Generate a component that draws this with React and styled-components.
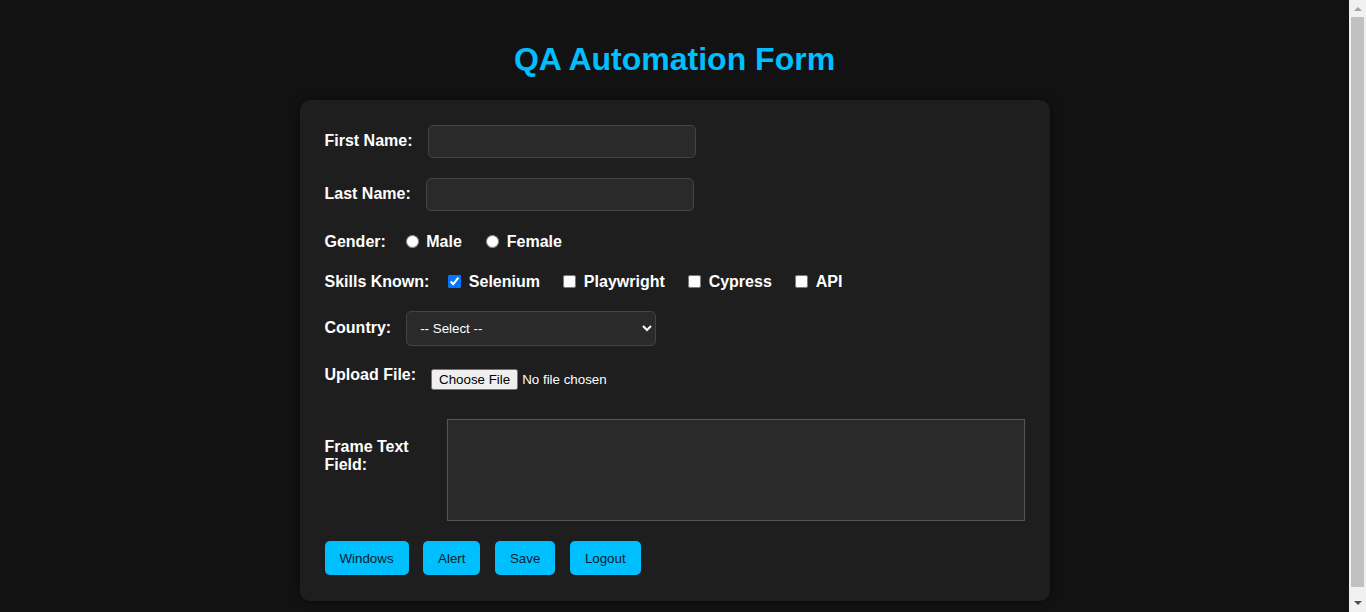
import React from "react";
import styled, { createGlobalStyle } from "styled-components";

const GlobalStyle = createGlobalStyle`
  html, body {
    margin: 0;
    background-color: #121212;
  }

  body {
    padding: 20px 37px 20px 20px;
    font-family: "Liberation Sans", Arial, sans-serif;
    color: #ffffff;
  }
`;

// browser scrollbar as seen in the screenshot (page is a little taller than the window)
const Scrollbar = styled.div`
  position: fixed;
  top: 0;
  right: 0;
  bottom: 0;
  width: 17px;
  display: flex;
  flex-direction: column;
  background-color: #f1f1f1;
`;

const ScrollArrow = styled.div`
  height: 17px;
  display: flex;
  align-items: center;
  justify-content: center;
  flex-shrink: 0;
`;

const ScrollThumb = styled.div`
  height: 570px;
  margin: 0 2px;
  background-color: #c1c1c1;
`;

const Title = styled.h1`
  text-align: center;
  color: #00bfff;
  font-size: 32px;
  margin: 21.44px 0;
  line-height: normal;
`;

const FormCard = styled.div`
  width: 750px;
  box-sizing: border-box;
  margin: 0 auto;
  padding: 25px 25px 26px;
  background-color: #1e1e1e;
  border-radius: 10px;
  box-shadow: 0 0 10px rgba(0, 0, 0, 0.5);
`;

const Row = styled.div`
  display: flex;
  align-items: ${(p) => p.$align || "center"};
  box-sizing: border-box;
  height: ${(p) => p.$height}px;
  padding-top: ${(p) => p.$pad || 0}px;
  margin-bottom: 20px;
`;

const Label = styled.label`
  font-size: 16px;
  font-weight: bold;
  line-height: 18px;
  margin-right: 15px;
  margin-top: ${(p) => p.$top || 0}px;
  width: ${(p) => (p.$width ? `${p.$width}px` : "auto")};
  flex-shrink: 0;
`;

const TextInput = styled.input`
  width: 250px;
  height: 15px;
  padding: 8px;
  background-color: #2a2a2a;
  border: 1px solid #444;
  border-radius: 5px;
  color: #fff;
  font-family: "Liberation Sans", Arial, sans-serif;
  font-size: 13.33px;
  outline: none;
`;

const Option = styled.label`
  display: flex;
  align-items: center;
  font-size: 16px;
  font-weight: bold;
  margin-right: 19.45px;

  input {
    margin: ${(p) => (p.$radio ? "0 7.45px 0 5px" : "0 7.45px 0 4px")};
    width: 13px;
    height: 13px;
  }
`;

const Select = styled.select`
  width: 250px;
  height: 35px;
  padding: 0 8px 0 9px;
  background-color: #2a2a2a;
  border: 1px solid #444;
  border-radius: 5px;
  color: #fff;
  font-family: "Liberation Sans", Arial, sans-serif;
  font-size: 13.33px;
  color-scheme: dark;
`;

const FileInput = styled.input`
  margin-top: 3px;
  color: #fff;
  font-family: "Liberation Sans", Arial, sans-serif;
  font-size: 13.33px;
  color-scheme: light;
`;

const FrameBox = styled.textarea`
  flex: 1;
  box-sizing: border-box;
  height: 102px;
  margin-top: 10px;
  background-color: #2a2a2a;
  border: 1px solid #555;
  resize: none;
  outline: none;
  color: #fff;
`;

const ButtonBar = styled.div`
  display: flex;
  gap: 14.5px;
`;

const ActionButton = styled.button`
  height: 34px;
  padding: 1px 15px 0;
  background-color: #00bfff;
  border: none;
  border-radius: 5px;
  color: #0d1b2a;
  font-family: "Liberation Sans", Arial, sans-serif;
  font-size: 13.33px;
  cursor: pointer;
`;

const Spacer = styled.div`
  flex: 1;
`;

const skills = ["Selenium", "Playwright", "Cypress", "API"];
const buttons = ["Windows", "Alert", "Save", "Logout"];

const App = () => {
  return (
    <>
      <GlobalStyle />
      <Title>QA Automation Form</Title>
      <FormCard>
        <Row $height={33}>
          <Label htmlFor="first">First Name:</Label>
          <TextInput id="first" type="text" />
        </Row>

        <Row $height={33}>
          <Label htmlFor="last">Last Name:</Label>
          <TextInput id="last" type="text" />
        </Row>

        <Row $height={20} $pad={2}>
          <Label>Gender:</Label>
          <Option $radio>
            <input type="radio" name="gender" />
            Male
          </Option>
          <Option $radio>
            <input type="radio" name="gender" />
            Female
          </Option>
        </Row>

        <Row $height={20} $pad={2}>
          <Label>Skills Known:</Label>
          {skills.map((skill) => (
            <Option key={skill}>
              <input type="checkbox" defaultChecked={skill === "Selenium"} />
              {skill}
            </Option>
          ))}
        </Row>

        <Row $height={35}>
          <Label htmlFor="country">Country:</Label>
          <Select id="country" defaultValue="">
            <option value="">-- Select --</option>
            <option value="in">India</option>
            <option value="us">USA</option>
            <option value="uk">UK</option>
          </Select>
        </Row>

        <Row $height={23} $align="flex-start">
          <Label htmlFor="upload">Upload File:</Label>
          <FileInput id="upload" type="file" />
        </Row>

        <Row $height={112} $align="flex-start">
          <Label $top={29} $width={107.5}>
            Frame Text Field:
          </Label>
          <FrameBox />
        </Row>

        <ButtonBar>
          {buttons.map((b) => (
            <ActionButton key={b}>{b}</ActionButton>
          ))}
        </ButtonBar>
      </FormCard>

      <Scrollbar>
        <ScrollArrow>
          <svg width="8" height="5" viewBox="0 0 8 5">
            <polygon points="0,5 4,1 8,5" fill="#a3a3a3" />
          </svg>
        </ScrollArrow>
        <ScrollThumb />
        <Spacer />
        <ScrollArrow>
          <svg width="8" height="5" viewBox="0 0 8 5">
            <polygon points="0,0 8,0 4,4" fill="#505050" />
          </svg>
        </ScrollArrow>
      </Scrollbar>
    </>
  );
};

export default App;
